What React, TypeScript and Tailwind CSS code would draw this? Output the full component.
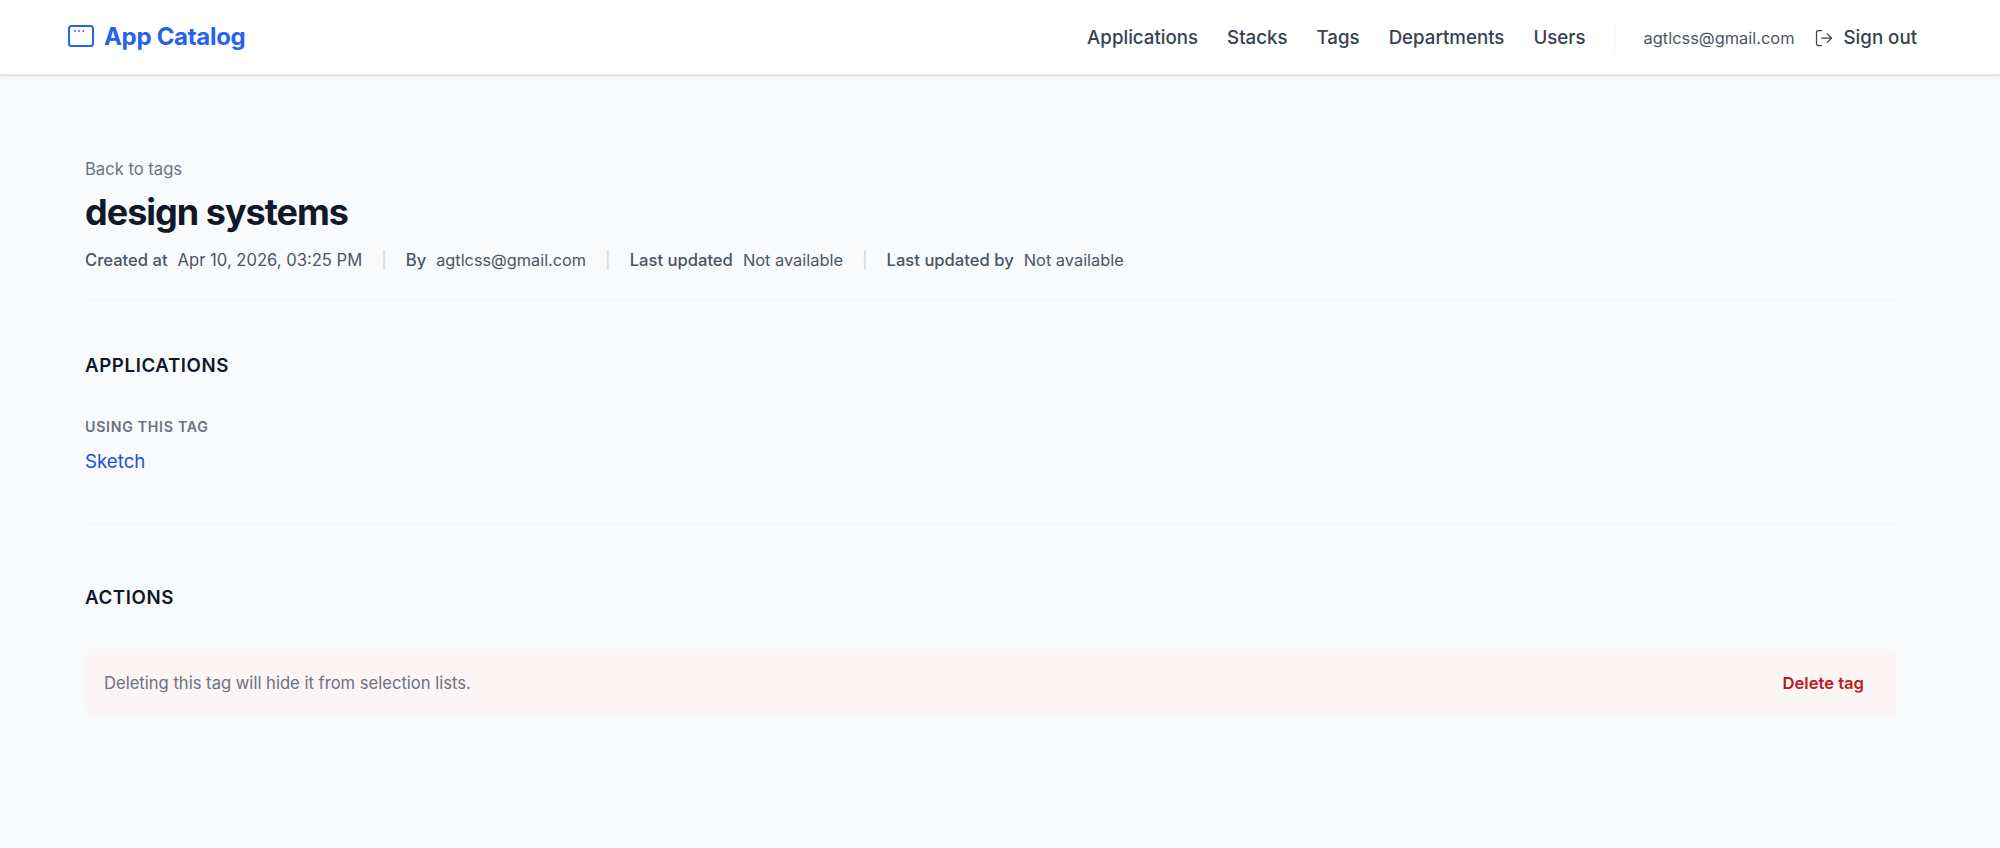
import { LogOut } from "lucide-react"

const navLinks = ["Applications", "Stacks", "Tags", "Departments", "Users"]

const meta = [
  { label: "Created at", value: "Apr 10, 2026, 03:25 PM", valueClass: "text-[16.6px]" },
  { label: "By", value: "agtlcss@gmail.com", valueClass: "text-[16.3px]" },
  { label: "Last updated", value: "Not available", valueClass: "text-[16.4px]" },
  { label: "Last updated by", value: "Not available", valueClass: "text-[16.4px]" },
]

export default function App() {
  return (
    <div className="min-h-[848px] bg-[#f9fafb] font-['Inter',sans-serif]">
      <header className="h-[75px] bg-white border-b border-[#e5e7eb] shadow-sm pl-[67px] pr-[83px] flex items-center justify-between">
        <a className="flex items-center gap-[9px] text-[#2563eb]">
          <svg width="28" height="24" viewBox="0 0 28 24" fill="none" stroke="currentColor" strokeWidth="2">
            <rect x="2" y="1" width="24" height="20" rx="2.5" />
            <circle cx="8" cy="6" r="0.9" fill="currentColor" stroke="none" />
            <circle cx="12" cy="6" r="0.9" fill="currentColor" stroke="none" />
            <circle cx="16.3" cy="6" r="0.9" fill="currentColor" stroke="none" />
          </svg>
          <span className="text-2xl font-bold tracking-[-0.3px]">App Catalog</span>
        </a>

        <nav className="flex items-center pt-[3px] text-[18.7px] font-medium text-[#374151]">
          <div className="flex items-center gap-[29px]">
            {navLinks.map((link) => (
              <a key={link}>{link}</a>
            ))}
          </div>
          <div className="w-px h-[30px] bg-[#f3f4f6] ml-7 mr-[29px]" />
          <span className="text-[16.4px] font-normal text-[#4b5563]">agtlcss@gmail.com</span>
          <button type="button" className="flex items-center gap-[10px] ml-[19px]">
            <LogOut size={20} strokeWidth={1.5} />
            Sign out
          </button>
        </nav>
      </header>

      <main className="pl-[85px] pr-[103px] pt-[82px]">
        <a className="block text-[16.6px] text-[#6b7280]">Back to tags</a>
        <h1 className="mt-[10px] text-[36px] leading-10 font-bold tracking-[-1px] text-[#111827]">design systems</h1>

        <div className="mt-4 flex items-center text-[16.6px] text-[#4b5563] pb-[27px] border-b border-[#f3f4f6]">
          {meta.map((item, i) => (
            <div key={item.label} className="flex items-center">
              {i > 0 && <span className="mx-[19px] text-[#d1d5db]">|</span>}
              <span className="font-medium mr-[10px]">{item.label}</span>
              <span className={item.valueClass}>{item.value}</span>
            </div>
          ))}
        </div>

        <section className="pt-[51px] pb-[47px] border-b border-[#f3f4f6]">
          <h2 className="text-[18.7px] font-semibold text-[#111827] tracking-[0.6px]">APPLICATIONS</h2>
          <p className="mt-[36px] text-[14.2px] font-semibold text-[#6b7280] tracking-[0.7px]">USING THIS TAG</p>
          <a className="block mt-[11px] text-[18.7px] text-[#1d4ed8]">Sketch</a>
        </section>

        <section className="pt-[60px]">
          <h2 className="text-[18.7px] font-semibold text-[#111827] tracking-[0.6px]">ACTIONS</h2>
          <div className="mt-[37px] h-[67px] rounded-lg bg-[#fbf5f5] pl-[19px] pr-[33px] pt-[2px] flex items-center justify-between">
            <p className="text-[16.6px] text-[#6b7280]">Deleting this tag will hide it from selection lists.</p>
            <button type="button" className="text-[16.6px] font-semibold text-[#b91c1c]">Delete tag</button>
          </div>
        </section>
      </main>
    </div>
  )
}
